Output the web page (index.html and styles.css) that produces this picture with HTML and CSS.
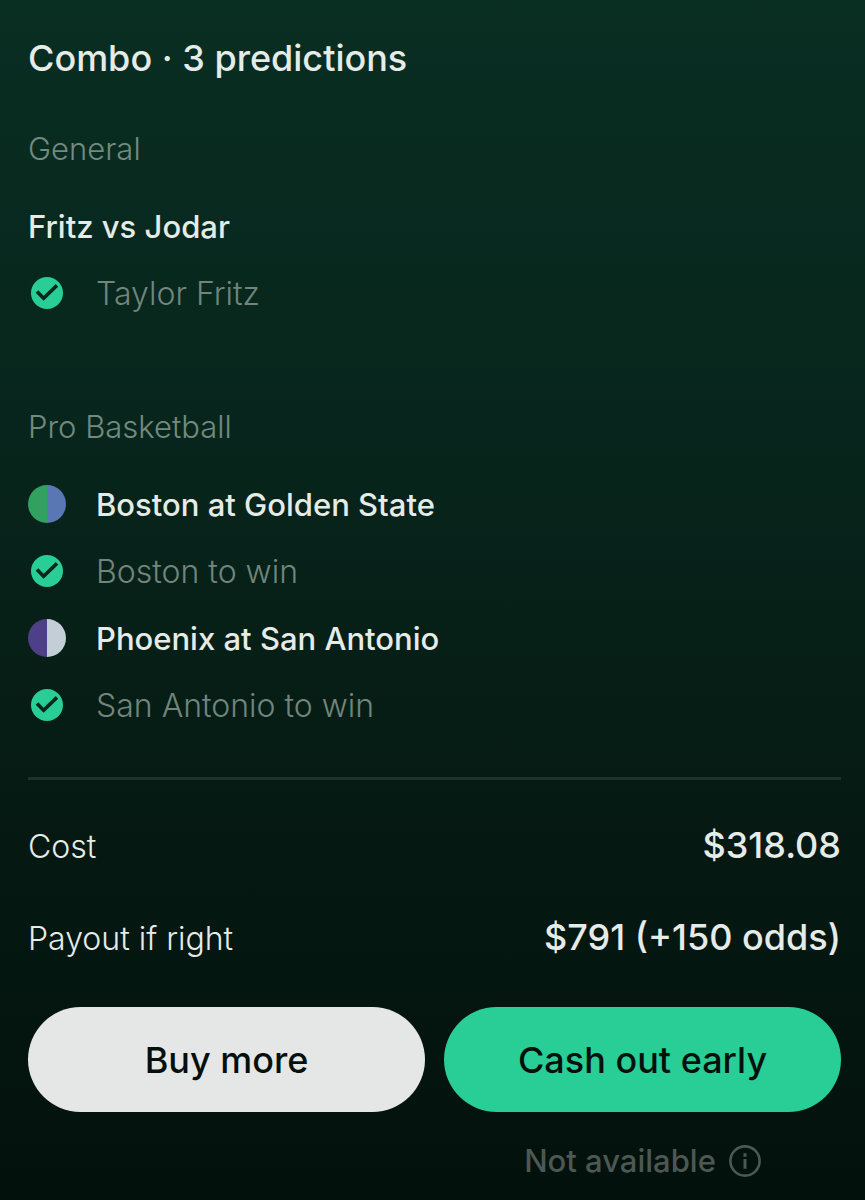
FILE: index.html
```html
<!DOCTYPE html>
<html lang="en">
<head>
<meta charset="utf-8">
<meta name="viewport" content="width=device-width, initial-scale=1">
<title>Combo</title>
<link rel="stylesheet" href="styles.css">
</head>
<body>
<svg class="defs" aria-hidden="true">
  <symbol id="check" viewBox="0 0 32 32">
    <circle cx="16" cy="16" r="16" fill="#28ce95"/>
    <path d="M6 14.600L12.600 21.200L26 8.400" fill="none" stroke="#07261c" stroke-width="3.600"/>
  </symbol>
</svg>
<main class="ticket">
  <h1 class="title">Combo · 3 predictions</h1>

  <section class="group">
    <h2 class="category">General</h2>
    <div class="legs">
      <h3 class="event">Fritz vs Jodar</h3>
      <div class="leg"><svg class="icon"><use href="#check"/></svg><span class="pick">Taylor Fritz</span></div>
    </div>
  </section>

  <section class="group">
    <h2 class="category">Pro Basketball</h2>
    <div class="legs">
      <div class="leg"><span class="teams teams-bos-gsw"></span><h3 class="event">Boston at Golden State</h3></div>
      <div class="leg"><svg class="icon"><use href="#check"/></svg><span class="pick">Boston to win</span></div>
      <div class="leg"><span class="teams teams-phx-sas"></span><h3 class="event">Phoenix at San Antonio</h3></div>
      <div class="leg"><svg class="icon"><use href="#check"/></svg><span class="pick">San Antonio to win</span></div>
    </div>
  </section>

  <hr class="divider">

  <dl class="totals">
    <div class="total"><dt>Cost</dt><dd>$318.08</dd></div>
    <div class="total"><dt>Payout if right</dt><dd>$791 (+150 odds)</dd></div>
  </dl>

  <div class="actions">
    <button class="button button-buy" type="button">Buy more</button>
    <button class="button button-cash" type="button">Cash out early</button>
    <p class="note">Not available
      <svg class="info" viewBox="0 0 32 32" aria-hidden="true">
        <circle cx="16" cy="16" r="14.600" fill="none" stroke="currentColor" stroke-width="2.600"/>
        <path d="M16 8.300v3.400M16 14v9.800" fill="none" stroke="currentColor" stroke-width="3"/>
      </svg>
    </p>
  </div>
</main>
</body>
</html>
```

FILE: styles.css
```css
* {
  box-sizing: border-box;
  margin: 0;
  padding: 0;
}

body {
  min-height: 100vh;
  background: linear-gradient(#092e22, #07241b 40%, #051912 70%, #03110c);
  color: #e5ece8;
  font: 300 32px/40px Inter, "Liberation Sans", sans-serif;
}

.defs {
  display: none;
}

.ticket {
  padding: 36px 24px 18px 28px;
}

.title {
  margin-bottom: 49px;
  font-size: 36px;
  font-weight: 500;
  line-height: 44px;
}

.category {
  margin-bottom: 36px;
  color: #728a80;
  font-size: 31px;
  font-weight: 300;
}

.group + .group {
  margin-top: 93px;
}

.legs {
  display: grid;
  gap: 25px;
}

.leg {
  display: grid;
  grid-template-columns: 38px 1fr;
  column-gap: 30px;
  align-items: center;
}

.event,
.pick {
  padding-top: 2px;
}

.event {
  font-size: 31px;
  font-weight: 500;
}

.pick {
  color: #71857c;
}

.icon {
  width: 32px;
  height: 32px;
  justify-self: center;
}

.teams {
  width: 38px;
  height: 38px;
  border-radius: 50%;
}

.teams-bos-gsw {
  background: linear-gradient(90deg, #32a05e 50%, #5977b2 50%);
}

.teams-phx-sas {
  background: linear-gradient(90deg, #4d4088 50%, #c4ced6 50%);
}

.divider {
  height: 3px;
  margin: 51px 0 43px;
  border: 0;
  background: #1e3029;
}

.totals {
  display: grid;
  gap: 46px;
  line-height: 44px;
}

.total {
  display: flex;
  justify-content: space-between;
  align-items: baseline;
}

.total dd {
  font-size: 36px;
  font-weight: 500;
}

.actions {
  display: grid;
  grid-template-columns: 1fr 1fr;
  gap: 29px 19px;
  margin-top: 46px;
}

.button {
  height: 105px;
  border: 0;
  border-radius: 53px;
  color: #04100c;
  font: 500 36px/44px Inter, "Liberation Sans", sans-serif;
}

.button-buy {
  background: #e5e7e6;
}

.button-cash {
  background: #28ce95;
}

.note {
  grid-column: 2;
  display: flex;
  justify-content: center;
  align-items: center;
  gap: 13px;
  color: #4b5854;
  font-size: 31px;
  font-weight: 500;
}

.info {
  width: 32px;
  height: 32px;
}
```
